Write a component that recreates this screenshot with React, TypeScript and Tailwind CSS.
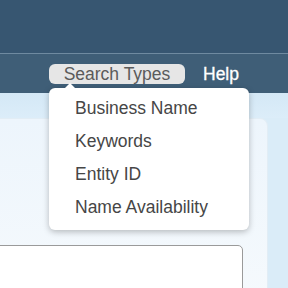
import React from "react";

export default function App() {
  const items = ["Business Name", "Keywords", "Entity ID", "Name Availability"];
  return (
    <div
      className="relative w-[288px] h-[288px] overflow-hidden bg-[#daecf8]"
      style={{ fontFamily: '"Liberation Sans", Arial, sans-serif' }}
    >
      <div className="h-[53px] bg-[#375671]" />
      <div className="h-px bg-[#6f8aa0]" />
      <div className="h-[39px] bg-[#3f5e77] flex items-center pl-[49px]">
        <div className="w-[136px] h-[20px] rounded-[6px] bg-[#e6e6e6] text-[#5b5b5b] text-[17.5px] leading-[20px] flex items-center justify-center">
          Search Types
        </div>
        <div className="ml-[18px] text-white text-[17.5px] leading-[20px] [-webkit-text-stroke:0.3px_white]">Help</div>
      </div>
      <div className="h-[25px] bg-gradient-to-b from-[#d4e8f6] to-[#dcedf9]" />
      <div className="mr-[20px] ml-[-10px] h-[200px] rounded-tr-[8px] bg-gradient-to-b from-[#edf5fc] to-[#f6fafd] border-t border-r border-[#e2edf5] pt-[126px] pr-[24px]">
        <div className="h-[60px] bg-white border border-[#9a9a9a] rounded-[5px]" />
      </div>

      <div className="absolute left-[49px] top-[88px] w-[200px] h-[142px] bg-white rounded-[6px] shadow-[0_2px_6px_rgba(0,0,0,0.25)] pt-[4px]">
        <div className="absolute left-[16px] top-[-5px] w-0 h-0 border-l-[5px] border-r-[5px] border-b-[5px] border-l-transparent border-r-transparent border-b-white" />
        {items.map((t) => (
          <div key={t} className="h-[33px] pl-[26px] flex items-center text-[17.5px] text-[#464646]">
            {t}
          </div>
        ))}
      </div>
    </div>
  );
}
